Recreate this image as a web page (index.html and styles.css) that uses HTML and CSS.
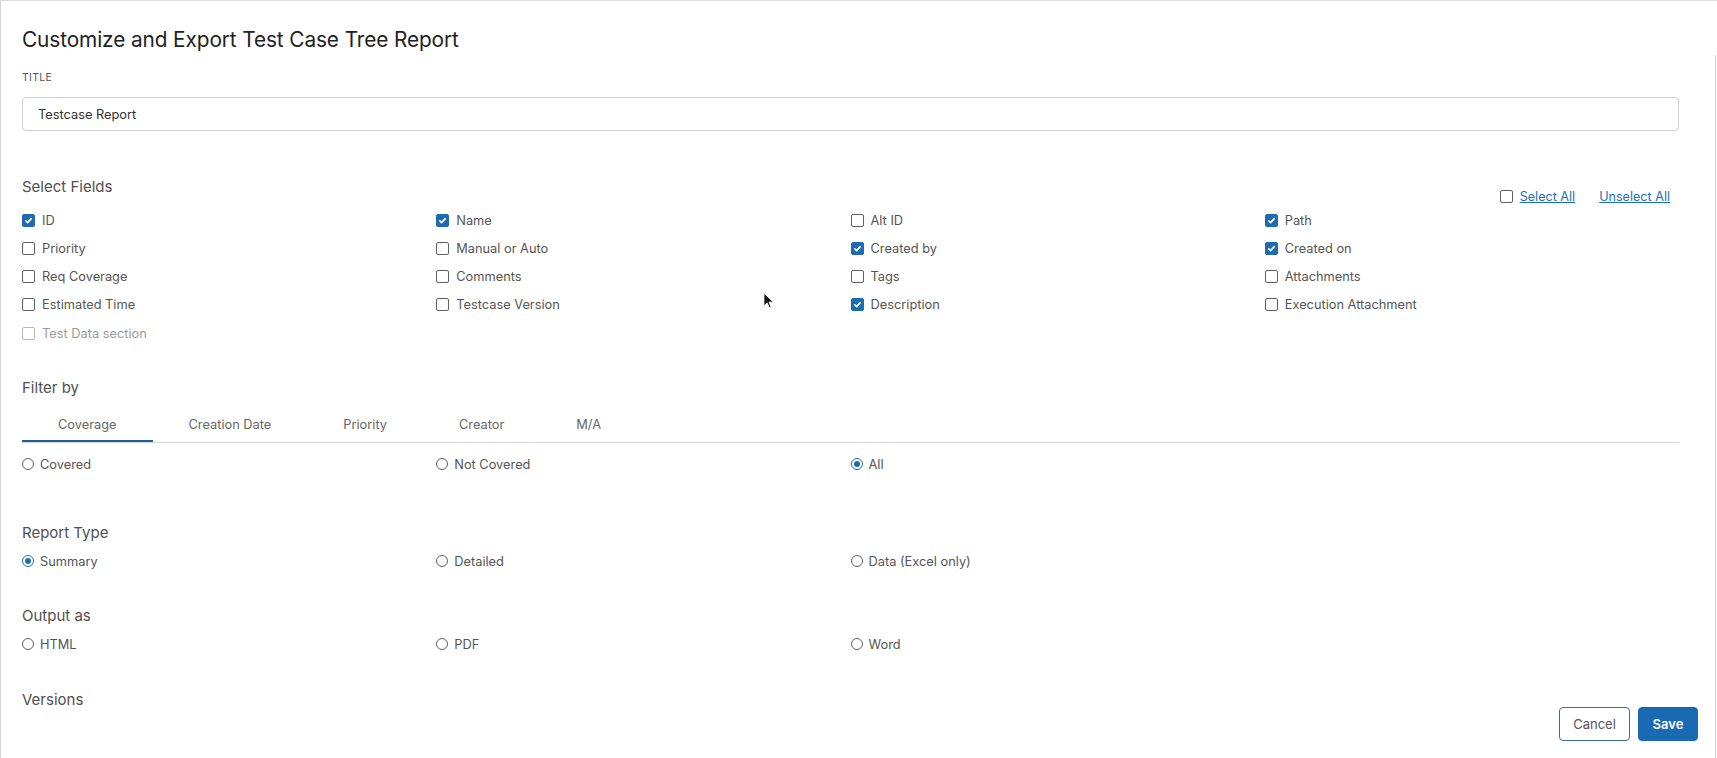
FILE: index.html
```html
<!DOCTYPE html>
<html lang="en">
<head>
<meta charset="utf-8">
<title>Customize and Export Test Case Tree Report</title>
<link rel="stylesheet" href="styles.css">
</head>
<body>
<div class="modal">
  <header class="modal-header">
    <h1 class="modal-title">Customize and Export Test Case Tree Report</h1>
  </header>
  <div class="modal-body">
    <div class="field-label">TITLE</div>
    <div class="text-input">Testcase Report</div>

    <div class="fields-head">
      <h2 class="section-title">Select Fields</h2>
      <div class="select-all">
        <span class="cb"></span>
        <a class="link" href="#">Select All</a>
        <a class="link unselect" href="#">Unselect All</a>
      </div>
    </div>

    <div class="grid4 fields">
      <label class="opt"><span class="cb checked"><svg viewBox="0 0 12 12"><path d="M3 6.3l2 2 4-4.4"/></svg></span>ID</label>
      <label class="opt"><span class="cb checked"><svg viewBox="0 0 12 12"><path d="M3 6.3l2 2 4-4.4"/></svg></span>Name</label>
      <label class="opt"><span class="cb"></span>Alt ID</label>
      <label class="opt"><span class="cb checked"><svg viewBox="0 0 12 12"><path d="M3 6.3l2 2 4-4.4"/></svg></span>Path</label>

      <label class="opt"><span class="cb"></span>Priority</label>
      <label class="opt"><span class="cb"></span>Manual or Auto</label>
      <label class="opt"><span class="cb checked"><svg viewBox="0 0 12 12"><path d="M3 6.3l2 2 4-4.4"/></svg></span>Created by</label>
      <label class="opt"><span class="cb checked"><svg viewBox="0 0 12 12"><path d="M3 6.3l2 2 4-4.4"/></svg></span>Created on</label>

      <label class="opt"><span class="cb"></span>Req Coverage</label>
      <label class="opt"><span class="cb"></span>Comments</label>
      <label class="opt"><span class="cb"></span>Tags</label>
      <label class="opt"><span class="cb"></span>Attachments</label>

      <label class="opt"><span class="cb"></span>Estimated Time</label>
      <label class="opt"><span class="cb"></span>Testcase Version</label>
      <label class="opt"><span class="cb checked"><svg viewBox="0 0 12 12"><path d="M3 6.3l2 2 4-4.4"/></svg></span>Description</label>
      <label class="opt"><span class="cb"></span>Execution Attachment</label>

      <label class="opt disabled last"><span class="cb"></span>Test Data section</label>
    </div>

    <h2 class="section-title filter-title">Filter by</h2>
    <div class="tabs">
      <div class="tab active">Coverage</div>
      <div class="tab">Creation Date</div>
      <div class="tab">Priority</div>
      <div class="tab">Creator</div>
      <div class="tab">M/A</div>
    </div>
    <div class="grid4 radios coverage">
      <label class="opt"><span class="rb"></span>Covered</label>
      <label class="opt"><span class="rb"></span>Not Covered</label>
      <label class="opt"><span class="rb on"></span>All</label>
    </div>

    <h2 class="section-title report-title">Report Type</h2>
    <div class="grid4 radios">
      <label class="opt"><span class="rb on"></span>Summary</label>
      <label class="opt"><span class="rb"></span>Detailed</label>
      <label class="opt"><span class="rb"></span>Data (Excel only)</label>
    </div>

    <h2 class="section-title output-title">Output as</h2>
    <div class="grid4 radios">
      <label class="opt"><span class="rb"></span>HTML</label>
      <label class="opt"><span class="rb"></span>PDF</label>
      <label class="opt"><span class="rb"></span>Word</label>
    </div>

    <h2 class="section-title versions-title">Versions</h2>
  </div>

  <div class="modal-footer">
    <button class="btn btn-cancel">Cancel</button>
    <button class="btn btn-save">Save</button>
  </div>

  <svg class="cursor" viewBox="0 0 12 18" width="11" height="17"><path d="M1 1v14l3.5-3.4 2.4 5.4 2-0.9-2.3-5.3h4.9z" fill="#111" stroke="#fff" stroke-width="1"/></svg>
</div>
</body>
</html>
```

FILE: styles.css
```css
* { box-sizing: border-box; }

html, body {
  margin: 0;
  padding: 0;
  background: #ffffff;
}

body {
  font-family: Inter, "Noto Sans", "Liberation Sans", sans-serif;
  color: #555;
  font-size: 12.8px;
}

.modal {
  position: relative;
  width: 1717px;
  height: 758px;
  border-top: 1px solid #dcdcdc;
  border-left: 1px solid #d4d4d4;
  overflow: hidden;
}

.modal-header {
  padding: 25px 21px 0;
  height: 54px;
}

.modal-title {
  margin: 0;
  font-size: 20.8px;
  line-height: 28px;
  font-weight: 400;
  color: #222;
  letter-spacing: -0.1px;
}

.modal-body {
  padding: 16px 36px 0 21px;
  margin-right: 1px;
  border-right: 1px solid #d2d2d2;
  height: 703px;
}

.field-label {
  font-size: 10.5px;
  line-height: 14px;
  color: #555;
  letter-spacing: 0.3px;
}

.text-input {
  margin-top: 12px;
  height: 34px;
  border: 1px solid #cfcfcf;
  border-radius: 4px;
  padding: 0 15px;
  display: flex;
  align-items: center;
  font-size: 12.8px;
  color: #333;
}

.section-title {
  margin: 0;
  font-size: 15px;
  line-height: 20px;
  font-weight: 400;
  color: #505050;
}

.fields-head {
  margin-top: 46px;
  display: flex;
  justify-content: space-between;
  align-items: flex-start;
  height: 29px;
}

.select-all {
  margin-top: 10px;
  margin-right: 9px;
  display: flex;
  align-items: center;
  height: 18px;
}

.select-all .cb {
  margin-right: 7px;
}

.link {
  color: #1a6fb5;
  text-decoration: underline;
  font-size: 12.6px;
}

.link.unselect {
  margin-left: 24px;
}

.grid4 {
  display: grid;
  grid-template-columns: repeat(4, 1fr);
  grid-auto-rows: 28px;
}

.opt {
  display: flex;
  align-items: center;
  font-size: 12.8px;
  color: #555;
  white-space: nowrap;
}

.opt.disabled {
  color: #9a9a9a;
}

.opt.disabled .cb {
  border-color: #b8b8b8;
}

.opt.last {
  margin-top: 3px;
}

.cb {
  width: 13px;
  height: 13px;
  border: 1.3px solid #5f5f5f;
  border-radius: 2px;
  margin-right: 7px;
  flex: none;
  display: flex;
  align-items: center;
  justify-content: center;
}

.cb.checked {
  background: #1d6cb1;
  border-color: #1d6cb1;
}

.cb svg {
  width: 11px;
  height: 11px;
  fill: none;
  stroke: #fff;
  stroke-width: 1.8;
  stroke-linecap: round;
  stroke-linejoin: round;
}

.filter-title {
  margin-top: 32px;
}

.tabs {
  margin-top: 8px;
  display: flex;
  border-bottom: 1px solid #d8d8d8;
}

.tab {
  height: 36px;
  display: flex;
  align-items: center;
  padding: 0 36px;
  font-size: 12.8px;
  color: #666;
}

.tab.active {
  border-bottom: 2px solid #1f5f8e;
  margin-bottom: -1px;
  padding-top: 2px;
}

.radios.coverage {
  margin-top: 7px;
}

.rb {
  width: 12px;
  height: 12px;
  border: 1.2px solid #5f5f5f;
  border-radius: 50%;
  margin-right: 6px;
  flex: none;
  display: flex;
  align-items: center;
  justify-content: center;
}

.rb.on {
  border-color: #1d6cb1;
}

.rb.on::after {
  content: "";
  width: 6px;
  height: 6px;
  border-radius: 50%;
  background: #1d6cb1;
}

.report-title {
  margin-top: 45px;
}

.report-title + .radios,
.output-title + .radios {
  margin-top: 4px;
}

.output-title {
  margin-top: 31px;
}

.versions-title {
  margin-top: 32px;
}

.modal-footer {
  position: absolute;
  right: 19px;
  bottom: 17px;
  display: flex;
  gap: 8px;
}

.btn {
  height: 34px;
  border-radius: 4px;
  font-family: Inter, "Noto Sans", "Liberation Sans", sans-serif;
  font-size: 13px;
  cursor: pointer;
}

.btn-cancel {
  width: 71px;
  background: #fff;
  border: 1px solid #3a6f9c;
  color: #555;
}

.btn-save {
  width: 60px;
  background: #1a6ab3;
  border: 1px solid #1a6ab3;
  color: #fff;
  font-weight: 600;
}

.cursor {
  position: absolute;
  left: 762px;
  top: 291px;
}
```
